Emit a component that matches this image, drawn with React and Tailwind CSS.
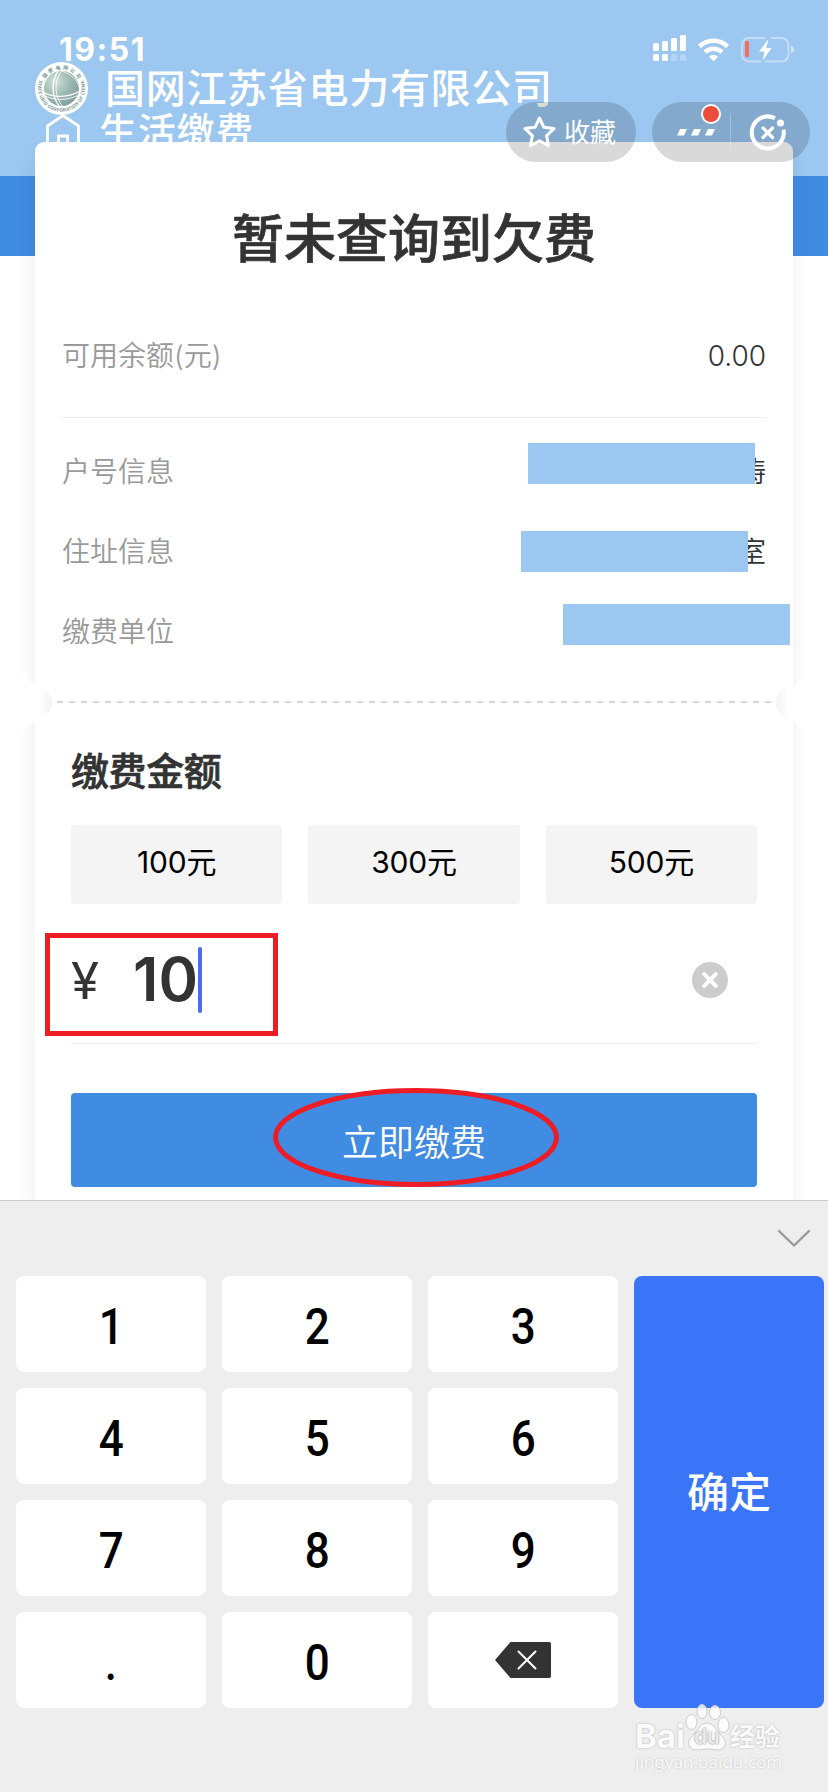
// =============================================================================
// App.jsx — Electricity bill payment page with the numeric keypad opened.
// The card holds the account info and the amount form, the keypad sits below it.
// =============================================================================

const INFO_ROWS = [
  { label: '户号信息', value: '涛', mask: 'right-[38px] top-[12px]' },
  { label: '住址信息', value: '室', mask: 'right-[45px] top-5' },
  { label: '缴费单位', value: '', mask: 'right-[3px] top-[13px]' },
];

const AMOUNTS = ['100', '300', '500'];

const KEYS = ['1', '2', '3', '4', '5', '6', '7', '8', '9', '.', '0', 'del'];

function StatusIcons() {
  return (
    <svg width="146" height="32" viewBox="650 33 146 32" fill="white">
      <rect x="653" y="43" width="6" height="8" rx="1.5" />
      <rect x="662" y="41" width="6" height="10" rx="1.5" />
      <rect x="671" y="38" width="6" height="13" rx="1.5" />
      <rect x="680" y="35" width="6" height="16" rx="1.5" />
      <rect x="653" y="54" width="6" height="7" rx="1.5" />
      <rect x="662" y="54" width="6" height="7" rx="1.5" />
      <rect x="671" y="54" width="6" height="7" rx="1.5" opacity="0.25" />
      <rect x="680" y="54" width="6" height="7" rx="1.5" opacity="0.25" />
      {/* wifi */}
      <g fill="none" stroke="white" strokeWidth="4.6">
        <path d="M699.5 46.5a20 20 0 0 1 28 0" />
        <path d="M705 52.2a12.2 12.2 0 0 1 17 0" />
      </g>
      <path d="M709 56.7a6.4 6.4 0 0 1 9 0l-4.5 4.5z" />
      {/* battery */}
      <path
        d="M765 38h-16a7 7 0 0 0-7 7v9.500a7 7 0 0 0 7 7h12M771 38h10.500a7 7 0 0 1 7 7v9.500a7 7 0 0 1-7 7h-17"
        fill="none"
        stroke="white"
        strokeOpacity="0.42"
        strokeWidth="2"
      />
      <path d="M791 45.500c4 1.500 4 6.500 0 8z" fillOpacity="0.5" />
      <rect x="745" y="41" width="4" height="16" rx="1" fill="#f26d63" />
      <path d="M768.500 39l-9.500 12.500h5.500l-2 9.500 9-13h-5.200z" />
    </svg>
  );
}

function GridLogo() {
  return (
    <svg width="53" height="53" viewBox="0 0 53 53" className="shrink-0">
      <defs>
        <radialGradient id="globe" cx="0.32" cy="0.3" r="0.75">
          <stop offset="0" stopColor="#d3e2da" />
          <stop offset="0.5" stopColor="#a3bdb5" />
          <stop offset="1" stopColor="#809f9b" />
        </radialGradient>
        <clipPath id="globeClip">
          <circle cx="26.500" cy="26.500" r="17.500" />
        </clipPath>
        <path id="arcTop" d="M10 17a19 19 0 0 1 33 0" />
        <path id="arcBottom" d="M4.500 18a23.500 23.500 0 1 0 44 0" />
      </defs>
      <circle cx="26.500" cy="26.500" r="26.500" fill="white" />
      <circle cx="26.500" cy="26.500" r="17.500" fill="url(#globe)" />
      <g fill="none" stroke="white" strokeWidth="1.300" clipPath="url(#globeClip)">
        <path d="M24 8c-8 10-8 27 1 37" />
        <path d="M27 8c-8 11-8 26 1 37" strokeWidth="0.900" />
        <path d="M8 30c10 6 26 6 37-1" />
        <path d="M8 33c11 6 26 6 37-1" strokeWidth="0.900" />
        <path d="M27 9c8 3 15 8 17 16" strokeWidth="0.800" />
      </g>
      <g fill="#7b9a94" className="font-['Noto_Sans_CJK_SC',sans-serif] font-bold">
        <text fontSize="5" letterSpacing="2">
          <textPath href="#arcTop">国家电网公司</textPath>
        </text>
        <text fontSize="4.600" textLength="90">
          <textPath href="#arcBottom">STATE GRID CORPORATION OF CHINA</textPath>
        </text>
      </g>
    </svg>
  );
}

function Header() {
  return (
    <header className="h-[176px] shrink-0 bg-[#9bc7f0] pt-8 text-white">
      <div className="flex h-[34px] items-center justify-between pl-[59px] pr-8">
        <span className="pt-0.5 text-[32px] font-bold leading-none tracking-[1.500px]">19:51</span>
        <StatusIcons />
      </div>
      <div className="-mt-1 flex h-[53px] items-center gap-[17px] pl-[35px]">
        <GridLogo />
        <h1 className="pt-px text-[40px] font-medium leading-none tracking-[0.700px]">
          国网江苏省电力有限公司
        </h1>
      </div>
      <div className="-mt-px flex h-[34px] items-center gap-[18px] pl-[45px]">
        <svg width="36" height="34" viewBox="0 0 36 34" fill="none" stroke="white" strokeWidth="2.800">
          <path d="M2.500 34V12L18 1.500 33.500 12v22" strokeLinejoin="round" />
          <path d="M13.500 34V22h9v12" />
        </svg>
        <span className="text-[38px] font-medium leading-none tracking-[0.800px]">生活缴费</span>
      </div>
    </header>
  );
}

// Floating mini-program controls, drawn over both the header and the card
function Capsules() {
  return (
    <div className="absolute right-[18px] top-[102px] z-10 flex gap-4 text-white">
      <div className="flex h-[60px] w-[130px] items-center gap-2 rounded-full bg-black/15 pl-[17px]">
        <svg width="33" height="32" viewBox="0 0 33 32" fill="none" stroke="white" strokeWidth="3" strokeLinejoin="round">
          <path d="M16.500 2l4.400 9.300 10.100 1.300-7.400 7 1.900 10.100-9-4.900-9 4.900 1.900-10.100-7.400-7 10.100-1.300z" />
        </svg>
        <span className="pt-0.5 text-[26px] leading-none">收藏</span>
      </div>
      <div className="h-[60px] w-[158px] rounded-full bg-black/15">
        <svg width="158" height="60" viewBox="652 102 158 60" fill="white">
          <path d="M680 129h7l-3 6.500h-7zM694 129h7l-3 6.500h-7zM708 129h7l-3 6.500h-7z" />
          <circle cx="711" cy="114" r="10" />
          <circle cx="711" cy="114" r="8" fill="#eb4d3d" />
          <path d="M730.500 114v35" stroke="white" strokeOpacity="0.250" />
          <path
            d="M775 118.200a16 16 0 1 0 8.500 11.500"
            fill="none"
            stroke="white"
            strokeWidth="4"
          />
          <circle cx="780.500" cy="123" r="3.600" />
          <path d="M763 128l9.500 9.500M772.500 128l-9.500 9.500" stroke="white" strokeWidth="3.200" strokeLinecap="round" />
        </svg>
      </div>
    </div>
  );
}

function InfoRow({ label, value, mask }) {
  return (
    <div className="relative flex h-20 items-center justify-between px-[27px] pt-px text-[28px] font-[350] leading-none">
      <span className="text-[#999]">{label}</span>
      <span className="text-[#333]">{value}</span>
      <div className={`absolute h-[41px] w-[227px] bg-[#9bc7f0] ${mask}`} />
    </div>
  );
}

// Ticket-style tear line: a round notch at each side with dashes in between
function TearLine() {
  return (
    <div className="relative mt-4 h-8 px-[22px]">
      <div className="absolute -left-[15px] top-0 size-8 rounded-full bg-linear-to-r from-white from-60% to-[#f3f3f3]" />
      <div className="absolute -left-[50px] -top-3 size-14 rounded-full bg-white" />
      <div className="absolute -right-[15px] top-0 size-8 rounded-full bg-linear-to-l from-white from-60% to-[#f3f3f3]" />
      <div className="absolute -right-[50px] -top-3 size-14 rounded-full bg-white" />
      <div className="relative top-[14px] h-0.5 bg-[repeating-linear-gradient(90deg,#d8d8d8_0_6px,transparent_6px_12px)]" />
    </div>
  );
}

function AmountForm() {
  return (
    <section className="px-9">
      <h3 className="flex h-[106px] items-center pb-[3px] text-[38px] font-medium leading-none tracking-[-0.400px] text-[#333] [-webkit-text-stroke:0.700px_#333]">
        缴费金额
      </h3>
      <div className="grid grid-cols-3 gap-[26px]">
        {AMOUNTS.map((amount) => (
          <button
            key={amount}
            className="flex h-[79px] items-center justify-center rounded bg-[#f4f4f4] pb-[5px] text-[30px] font-[370] leading-none tracking-[-0.200px] text-black"
          >
            {amount}元
          </button>
        ))}
      </div>
      <div className="relative flex h-[140px] items-center border-b border-[#eee] pt-[11px] text-[#333]">
        <span className="w-[62px] pt-0.5 text-[51px] leading-none">¥</span>
        <span className="text-[60px] font-semibold leading-none tracking-[0.200px]">10</span>
        <span className="mt-0.5 h-[66px] w-1 rounded-sm bg-[#4a6bef]" />
        <svg className="ml-auto mr-[29px] mt-0.5" width="36" height="36" viewBox="0 0 36 36">
          <circle cx="18" cy="18" r="18" fill="#ccc" />
          <path d="M12.200 12.200l11.600 11.600M23.800 12.200L12.200 23.800" stroke="white" strokeWidth="4" strokeLinecap="round" />
        </svg>
        <div className="absolute -left-[26px] top-[29px] h-[103px] w-[233px] border-[5px] border-[#ee1c25]" />
      </div>
      <button className="relative mt-[49px] flex h-[94px] w-full items-center justify-center rounded bg-[#408ce2] text-[36px] font-[350] leading-none text-white">
        <span className="pt-1.5">立即缴费</span>
        <svg className="absolute -top-[5px] left-[202px]" width="286" height="99" viewBox="0 0 286 99">
          <ellipse cx="143" cy="49.500" rx="140.500" ry="47" fill="none" stroke="#ee1c25" strokeWidth="5" />
        </svg>
      </button>
    </section>
  );
}

function Card() {
  return (
    <main className="relative mx-[35px] -mt-[114px] h-[1058px] shrink-0 rounded-t-[9px] bg-white shadow-[0_12px_20px_rgba(0,0,0,0.080)]">
      <h2 className="flex h-[153px] items-center justify-center pt-[43px] text-[52px] font-medium leading-none text-[#333] [-webkit-text-stroke:0.700px_#333]">
        暂未查询到欠费
      </h2>
      <div className="mx-[27px] flex h-[123px] items-center justify-between border-b border-[#eee] text-[28px] font-[350] leading-none">
        <span className="text-[#999]">可用余额(元)</span>
        <span className="text-[#333]">0.00</span>
      </div>
      <div className="mt-[13px]">
        {INFO_ROWS.map((row) => (
          <InfoRow key={row.label} {...row} />
        ))}
      </div>
      <TearLine />
      <AmountForm />
    </main>
  );
}

function DeleteIcon() {
  return (
    <svg width="56" height="36" viewBox="0 0 56 36">
      <path d="M15.500 0H54a2 2 0 0 1 2 2v32a2 2 0 0 1-2 2H15.500L0 18z" fill="#333" />
      <path d="M23.500 9.500l17 17M40.500 9.500l-17 17" stroke="white" strokeWidth="2" strokeLinecap="round" />
    </svg>
  );
}

function Keypad() {
  return (
    <div className="relative h-[592px] shrink-0 border-t border-[#c9c9c9] bg-[#eee]">
      <div className="flex h-[75px] items-center justify-end pr-[17px]">
        <svg width="34" height="20" viewBox="0 0 34 20" fill="none" stroke="#999" strokeWidth="2.400" strokeLinecap="round" strokeLinejoin="round">
          <path d="M2 2l15 14.500L32 2" />
        </svg>
      </div>
      <div className="flex gap-4 pl-4">
        <div className="grid grid-cols-[190px_190px_190px] gap-4">
          {KEYS.map((key) => (
            <button
              key={key}
              className="flex h-24 items-center justify-center rounded-lg bg-white font-[Roboto,sans-serif] text-[50px] font-medium leading-none text-black"
            >
              {key === 'del' ? <DeleteIcon /> : <span className="scale-x-[0.880] pt-[5px]">{key}</span>}
            </button>
          ))}
        </div>
        <button className="flex w-[190px] items-center justify-center rounded-lg bg-[#3975f6] pt-0.5 text-[42px] font-medium leading-none text-white">
          确定
        </button>
      </div>
    </div>
  );
}

function Watermark() {
  return (
    <div className="absolute left-[635px] top-[1704px] w-[150px] text-[#fafafa] [text-shadow:0_0_2px_#aaa]">
      <div className="flex h-[46px] items-end">
        <span className="w-[50px] text-[33px] font-bold leading-[28px]">Bai</span>
        <div className="relative h-[46px] w-[45px] shrink-0">
          <svg width="45" height="48" viewBox="0 0 45 48" fill="white" fillOpacity="0.800" stroke="#ccc" strokeWidth="1">
            <ellipse cx="6.500" cy="18" rx="5.500" ry="7.500" />
            <ellipse cx="17" cy="7.500" rx="5" ry="7" />
            <ellipse cx="30" cy="8.500" rx="5.500" ry="7" />
            <ellipse cx="38.500" cy="21" rx="5.500" ry="7.500" />
            <path d="M22 19c6 0 8 6 13 11s7 9 4 13c-3 5-10 2-17 2s-14 3-17-2c-3-4-1-8 4-13s7-11 13-11z" />
          </svg>
          <span className="absolute left-[9px] top-[22px] text-[21px] font-semibold leading-none text-[#ececec] [text-shadow:0_0_2px_#777]">
            du
          </span>
        </div>
        <span className="shrink-0 text-[25px] font-bold leading-[25px]">经验</span>
      </div>
      <div className="font-['Noto_Sans',sans-serif] text-[17px] leading-6 [text-shadow:0_0_2px_#bbb]">
        jingyan.baidu.com
      </div>
    </div>
  );
}

export default function App() {
  return (
    <div className="relative flex h-[1792px] w-[828px] flex-col overflow-hidden bg-white font-[Inter,'Noto_Sans_CJK_SC',sans-serif]">
      <Header />
      <div className="h-20 shrink-0 bg-[#408ce2]" />
      <Card />
      <Keypad />
      <Capsules />
      <Watermark />
    </div>
  );
}
